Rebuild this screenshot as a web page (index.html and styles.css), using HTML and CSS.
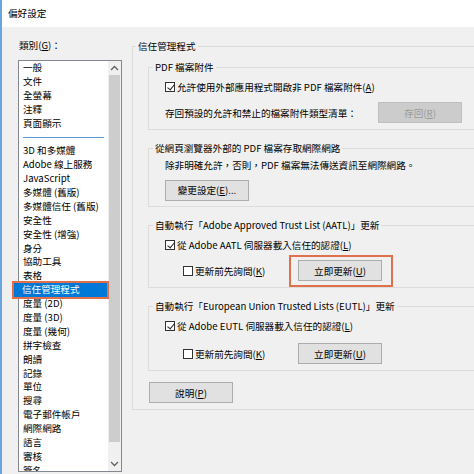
FILE: index.html
```html
<!DOCTYPE html>
<html lang="zh-Hant">
  <head>
    <meta charset="UTF-8" />
    <meta name="viewport" content="width=device-width, initial-scale=1.0" />
    <title>偏好設定</title>
    <link rel="stylesheet" href="styles.css">
  </head>
  <body>
    <div class="window">
      <div class="titlebar">偏好設定</div>

      <div class="content">
        <!-- 類別清單 -->
        <div class="sidebar">
          <div class="cat-label">類別(<u>G</u>)：</div>
          <div class="listbox">
            <ul class="items">
              <li>一般</li>
              <li>文件</li>
              <li>全螢幕</li>
              <li>注釋</li>
              <li>頁面顯示</li>
              <li class="sep"></li>
              <li>3D 和多媒體</li>
              <li>Adobe 線上服務</li>
              <li>JavaScript</li>
              <li>多媒體 (舊版)</li>
              <li>多媒體信任 (舊版)</li>
              <li>安全性</li>
              <li>安全性 (增強)</li>
              <li>身分</li>
              <li>協助工具</li>
              <li>表格</li>
              <li class="selected">信任管理程式</li>
              <li>度量 (2D)</li>
              <li>度量 (3D)</li>
              <li>度量 (幾何)</li>
              <li>拼字檢查</li>
              <li>朗讀</li>
              <li>記錄</li>
              <li>單位</li>
              <li>搜尋</li>
              <li>電子郵件帳戶</li>
              <li>網際網路</li>
              <li>語言</li>
              <li>審核</li>
              <li>簽名</li>
            </ul>
            <div class="scrollbar">
              <div class="arrow">
                <svg width="9" height="6" viewBox="0 0 9 6"><polyline points="1,5 4.5,1.5 8,5" fill="none" stroke="#606060" stroke-width="1.3" /></svg>
              </div>
              <div class="thumb"></div>
              <div class="track"></div>
              <div class="arrow">
                <svg width="9" height="6" viewBox="0 0 9 6"><polyline points="1,1 4.5,4.5 8,1" fill="none" stroke="#606060" stroke-width="1.3" /></svg>
              </div>
            </div>
          </div>
        </div>

        <!-- 信任管理程式 -->
        <div class="main">
          <fieldset class="group outer">
            <legend>信任管理程式</legend>

            <fieldset class="group">
              <legend>PDF 檔案附件</legend>
              <div class="row">
                <span class="check on"></span>
                <span>允許使用外部應用程式開啟非 PDF 檔案附件(<u>A</u>)</span>
              </div>
              <div class="row">
                <span class="restore-label">存回預設的允許和禁止的檔案附件類型清單：</span>
                <button disabled>存回(<u>R</u>)</button>
              </div>
            </fieldset>

            <fieldset class="group web">
              <legend>從網頁瀏覽器外部的 PDF 檔案存取網際網路</legend>
              <div class="text-row">除非明確允許，否則，PDF 檔案無法傳送資訊至網際網路。</div>
              <div class="row">
                <button>變更設定(<u>E</u>)...</button>
              </div>
            </fieldset>

            <fieldset class="group">
              <legend>自動執行「Adobe Approved Trust List (AATL)」更新</legend>
              <div class="row">
                <span class="check on"></span>
                <span>從 Adobe AATL 伺服器載入信任的認證(<u>L</u>)</span>
              </div>
              <div class="row sub">
                <span class="check"></span>
                <span class="ask">更新前先詢問(<u>K</u>)</span>
                <button class="marked">立即更新(<u>U</u>)</button>
              </div>
            </fieldset>

            <fieldset class="group eutl">
              <legend>自動執行「European Union Trusted Lists (EUTL)」更新</legend>
              <div class="row">
                <span class="check on"></span>
                <span>從 Adobe EUTL 伺服器載入信任的認證(<u>L</u>)</span>
              </div>
              <div class="row sub">
                <span class="check"></span>
                <span class="ask">更新前先詢問(<u>K</u>)</span>
                <button>立即更新(<u>U</u>)</button>
              </div>
            </fieldset>

            <div class="help-row">
              <button>說明(<u>P</u>)</button>
            </div>
          </fieldset>
        </div>
      </div>
    </div>
  </body>
</html>
```

FILE: styles.css
```css
* {
  box-sizing: border-box;
}

body {
  margin: 0;
  height: 474px;
  overflow: hidden;
  background: #f0f0f0;
  font-family: "Noto Sans CJK TC", "Noto Sans", sans-serif;
  font-size: 9.6px;
  color: #000;
}

.window {
  height: 474px;
  border-left: 2px solid #6aa5e0;
}

.titlebar {
  height: 27px;
  line-height: 27px;
  padding-left: 6px;
  background: #fff;
}

.content {
  display: flex;
  gap: 10px;
  padding: 11px 0 0 16px;
}

/* 類別清單 */
.sidebar {
  width: 104px;
  flex-shrink: 0;
}

.cat-label {
  line-height: 14px;
  padding-left: 1px;
  margin-bottom: 8px;
}

.listbox {
  display: flex;
  height: 412px;
  border: 1px solid #828790;
  background: #fff;
  overflow-x: visible;
  overflow-y: clip;
}

.items {
  flex: 1;
  margin: 0;
  padding: 0 0 0 4px;
  list-style: none;
}

.items li {
  height: 13.9px;
  line-height: 13.9px;
  white-space: nowrap;
}

.items li.sep {
  padding-top: 6.5px;
}

.items li.sep::before {
  content: "";
  display: block;
  width: 81px;
  height: 1px;
  background: #5b9bd5;
}

.items li.selected {
  position: relative;
  width: 93px;
  margin-left: -9px;
  padding-left: 8px;
  background: #0078d7;
  color: #fff;
  box-shadow: 0 0 0 2px #e0704c;
}

.scrollbar {
  display: flex;
  flex-direction: column;
  width: 13px;
  background: #f0f0f0;
}

.arrow {
  height: 14px;
  display: flex;
  align-items: center;
  justify-content: center;
}

.thumb {
  height: 367px;
  margin: 0 1px;
  background: #cdcdcd;
}

.track {
  flex: 1;
}

/* 右側設定 */
.main {
  width: 360px;
  flex-shrink: 0;
  margin-top: 1px;
}

.group {
  margin: 0;
  min-width: 0;
  padding: 3px 0 6px 16px;
  border: 1px solid #dcdcdc;
}

.group legend {
  margin-left: -12px;
  padding: 0 2px;
  line-height: 14px;
}

.outer {
  padding: 7px 0 6px 15px;
}

.outer > .group + .group {
  margin-top: 11px;
}

.row {
  display: flex;
  align-items: center;
  gap: 2px;
  height: 20px;
}

.row + .row {
  margin-top: 5px;
  height: 21px;
}

.eutl .row + .row {
  margin-top: 7px;
}

.row.sub {
  padding-left: 18px;
}

.text-row {
  line-height: 14px;
}

.web .text-row + .row {
  margin-top: 8px;
}

.check {
  width: 10px;
  height: 10px;
  border: 1px solid #333;
  background: #fff;
  position: relative;
  flex-shrink: 0;
}

.check.on::after {
  content: "";
  position: absolute;
  left: 2.5px;
  top: 0px;
  width: 3px;
  height: 6px;
  border: solid #222;
  border-width: 0 1.2px 1.2px 0;
  transform: rotate(40deg);
}

.restore-label {
  width: 211px;
}

.ask {
  width: 101px;
}

button {
  width: 84px;
  height: 21px;
  padding: 0;
  border: 1px solid #adadad;
  background: #e1e1e1;
  font: inherit;
  color: #000;
}

button:disabled {
  background: #cccccc;
  border-color: #bfbfbf;
  color: #9a9a9a;
}

button.marked {
  position: relative;
}

button.marked::after {
  content: "";
  position: absolute;
  top: -6px;
  right: -12px;
  bottom: -7px;
  left: -10px;
  border: 2px solid #e0704c;
}

.help-row {
  margin-top: 11px;
  padding-left: 1px;
}
```
